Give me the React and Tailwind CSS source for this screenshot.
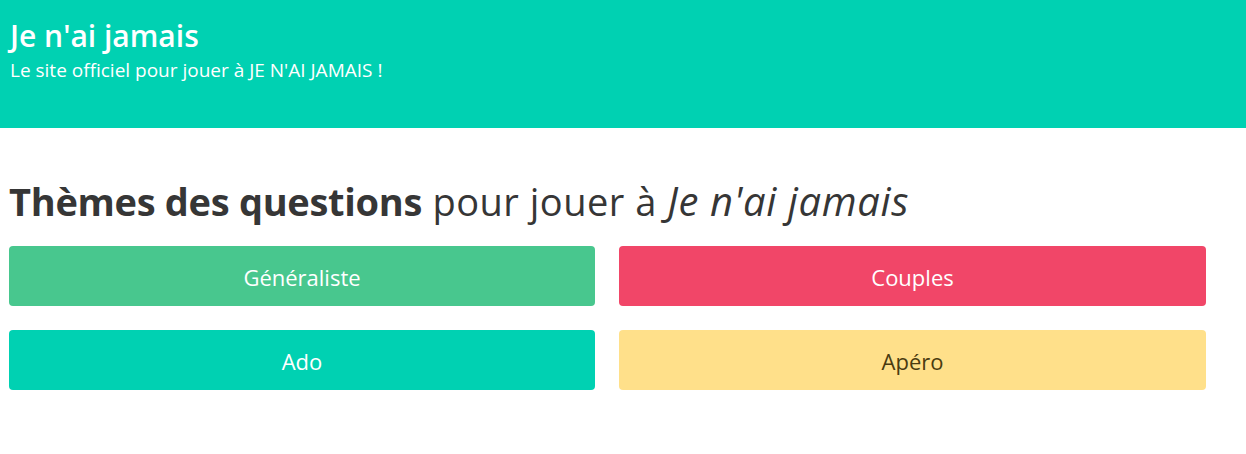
import React from 'react';

const themes = [
  { label: 'Généraliste', className: 'bg-[#48c78e] text-white' },
  { label: 'Couples', className: 'bg-[#f14668] text-white' },
  { label: 'Ado', className: 'bg-[#00d1b2] text-white' },
  { label: 'Apéro', className: 'bg-[#ffe08a] text-[#4a3b10]' },
];

const App = () => {
  return (
    <div className="min-h-screen bg-white font-['Open_Sans',sans-serif] text-[#363636]">
      {/* Hero */}
      <header className="h-[128px] bg-[#00d1b2] px-[10px] pt-[16px] text-white">
        <h1 className="text-[30px] font-semibold leading-[40px]">Je n'ai jamais</h1>
        <p className="mt-[2px] text-[19px] leading-[24px]">Le site officiel pour jouer à JE N'AI JAMAIS !</p>
      </header>

      {/* Themes */}
      <main className="px-[9px] pt-[49px]">
        <h2 className="text-[38px] leading-[48px]">
          <strong className="font-bold tracking-[-0.3px]">Thèmes des questions</strong>
          <span className="tracking-[0.5px]"> pour jouer à </span>
          <em className="text-[40px] tracking-[0.6px]">Je n'ai jamais</em>
        </h2>
        <div className="mt-[21px] grid grid-cols-[586px_587px] gap-x-[24px] gap-y-[24px]">
          {themes.map((t) => (
            <button
              key={t.label}
              className={`flex h-[60px] items-center justify-center rounded-[4px] pt-[3px] text-[22px] ${t.className}`}
            >
              {t.label}
            </button>
          ))}
        </div>
      </main>
    </div>
  );
};

export default App;
